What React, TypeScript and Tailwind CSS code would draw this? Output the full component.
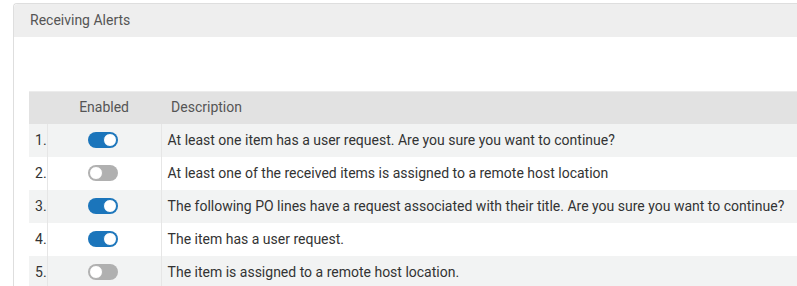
const rows = [
  { on: true, text: 'At least one item has a user request. Are you sure you want to continue?' },
  { on: false, text: 'At least one of the received items is assigned to a remote host location' },
  { on: true, text: 'The following PO lines have a request associated with their title. Are you sure you want to continue?' },
  { on: true, text: 'The item has a user request.' },
  { on: false, text: 'The item is assigned to a remote host location.' },
];

function Toggle({ on }: { on: boolean }) {
  return (
    <div
      className={`relative w-[30px] h-[16px] rounded-full ${on ? 'bg-[#1b75bb]' : 'bg-[#b0b0b0]'}`}
    >
      <div
        className={`absolute top-[1px] w-[14px] h-[14px] rounded-full bg-white border ${
          on ? 'right-[1px] border-[#1b75bb]' : 'left-[1px] border-[#b0b0b0]'
        }`}
      />
    </div>
  );
}

export default function App() {
  return (
    <div className="w-[797px] h-[286px] overflow-hidden bg-white pl-[13px] pt-[3px] font-['Roboto',sans-serif]">
      <div className="w-[800px] h-[300px] border-l border-t border-[#dedede] rounded-tl-[4px] bg-white">
        <div className="h-[33px] bg-[#eeeeee] rounded-tl-[4px] flex items-center pl-[16px] text-[14px] text-[#555]">
          Receiving Alerts
        </div>
        <div className="pt-[54px] pl-[15px]">
          <table className="w-[780px] border-collapse text-[14px]">
            <thead>
              <tr className="h-[32px] bg-[#e2e2e2] border-t border-[#ececec] text-[#555]">
                <th className="w-[17px] p-0"></th>
                <th className="w-[114px] p-0 font-normal text-center">Enabled</th>
                <th className="p-0 pl-[10px] font-normal text-left">Description</th>
              </tr>
            </thead>
            <tbody>
              {rows.map((r, i) => (
                <tr key={i} className={`h-[33px] text-[#333] ${i % 2 === 0 ? 'bg-[#f2f3f3]' : 'bg-white'}`}>
                  <td className="p-0 pl-[6px] border-r border-[#e6e6e6] whitespace-nowrap">{i + 1}.</td>
                  <td className="p-0 border-r border-[#e6e6e6]">
                    <div className="flex justify-center pr-[2px]">
                      <Toggle on={r.on} />
                    </div>
                  </td>
                  <td className="p-0 pl-[6px] whitespace-nowrap">{r.text}</td>
                </tr>
              ))}
            </tbody>
          </table>
        </div>
      </div>
    </div>
  );
}
